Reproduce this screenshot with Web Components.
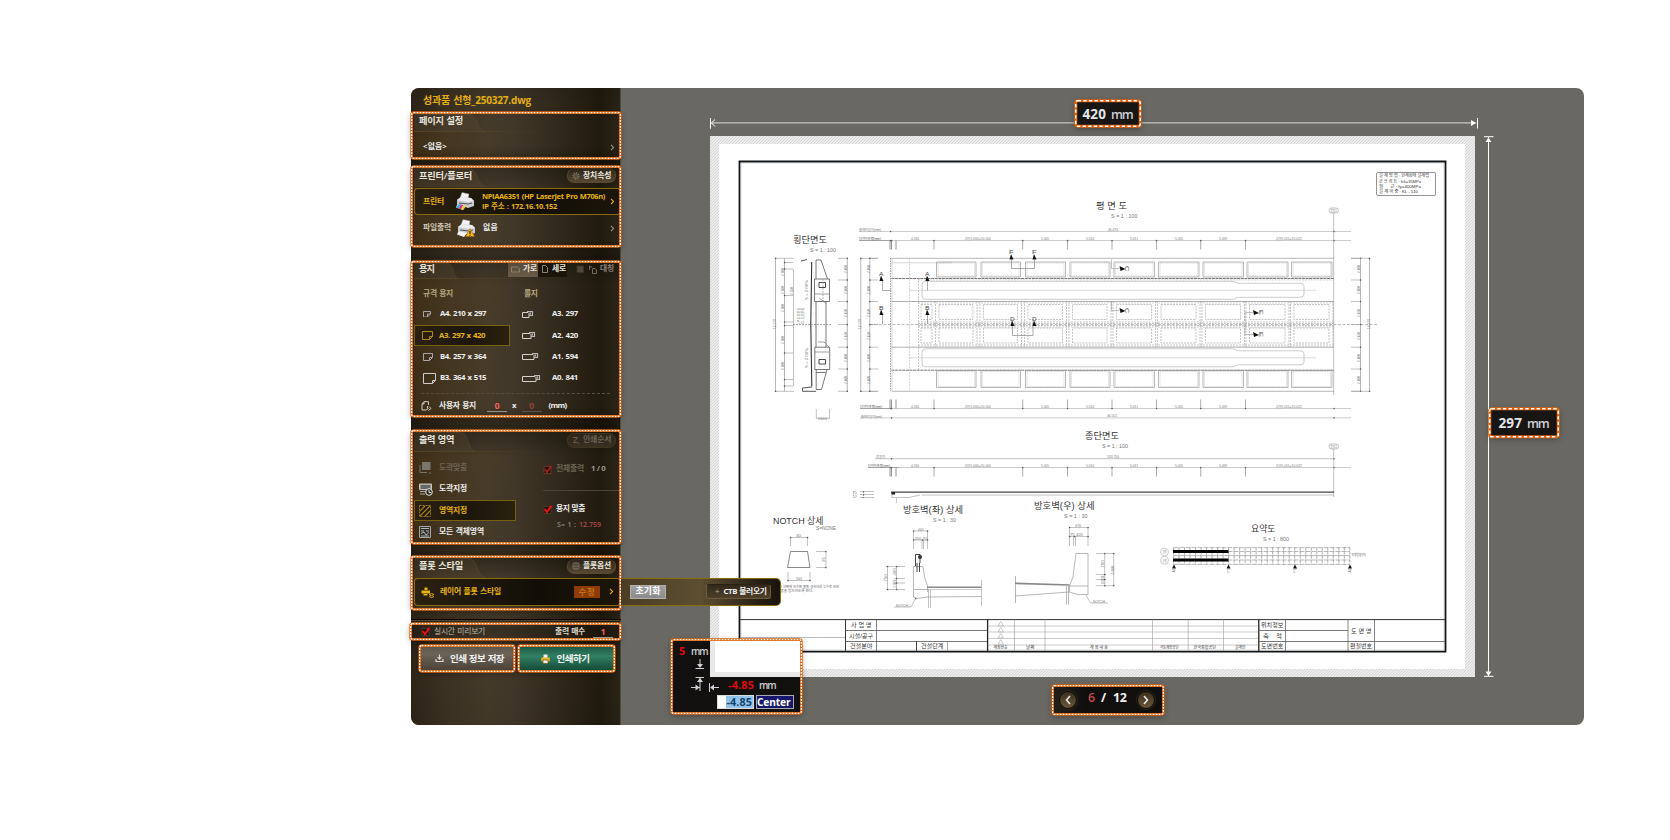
<!DOCTYPE html>
<html lang="ko">
<head>
<meta charset="utf-8">
<title>Plot preview</title>
<style>
html,body{margin:0;height:100%;background:#fff}
body{font-family:"Open Sans","Noto Sans CJK KR",sans-serif;font-weight:600;color:#eee;overflow:hidden;padding:88px 0 0 411px;box-sizing:border-box}
</style>
</head>
<body>
<plot-window></plot-window>
<script>
const define = (name, html, init) => customElements.define(name, class extends HTMLElement {
  connectedCallback() {
    if (this.shadowRoot) return;
    const root = this.attachShadow({mode: 'open'});
    const t = document.createElement('template');
    t.innerHTML = typeof html === 'function' ? html(this) : html;
    root.append(t.content.cloneNode(true));
    if (init) init(this, root);
  }
});

define('plot-window', `
<style>
:host{display:grid;grid-template-columns:210px 1fr;width:1173px;height:637px;border-radius:8px;background:#6a6863}
side-panel{z-index:2}
</style>
<side-panel></side-panel><preview-area></preview-area>`);

/* ---------- sidebar ---------- */
define('side-panel', `
<style>
:host{display:flex;flex-direction:column;position:relative;border-radius:8px 0 0 8px;line-height:1;font-size:7.800px;font-weight:700;word-spacing:.09em;
 background:linear-gradient(180deg,#0002 0,#0000 5%,#0000 9%,#0004 12%,#0000 16%,#0000 24%,#0004 26.5%,#0000 31%,#0000 50%,#0005 53%,#0000 58%,#0000 71%,#0005 73.5%,#0000 77%,#0000 82%,#0003 85%,#0000 90%,#0001 100%),
 linear-gradient(90deg,#2e2518 0,#3c3223 16%,#453b2a 36%,#42382a 48%,#31291b 70%,#211a0e 90%,#2c2518 100%);
 box-shadow:inset -1px 0 #504a3c}
.title{height:24px;display:flex;align-items:center;padding-left:12px;color:#e6b011;font-size:10px;font-weight:700}
.row{display:flex;align-items:center}
.row>*{flex:none}
.gold{color:#e2ae13}
.dim{color:#6c6455}
.sel{box-sizing:border-box;border:1px solid #77600f;background:linear-gradient(90deg,#2a2112,#1d160b 55%,#2a210f);color:#e8b411}
.printer{height:27px;margin:2px 0 0 3px;padding-left:8px;border-radius:4px;border-color:#8b6b10;border-right-color:#5f4b15;background:linear-gradient(90deg,#2b2111,#120e07 60%,#1c150a)}
.chev{margin-left:auto;margin-right:6px}
.chev:not(.gold){color:#958e7f}
.grid{display:grid;grid-template-columns:96px 1fr;margin-left:3px}
.cell{display:flex;align-items:center;height:21.4px;box-sizing:border-box;padding-left:8px;border:1px solid transparent}
.cell>*{flex:none}
.cell ui-icon{width:17px}
.cell.r{padding-left:11px}
.cell.r ui-icon{width:30px}
.cell.sel{padding-left:7px;border:1px solid #77600f}
.num{border-bottom:1px solid #99938a;width:20px;text-align:center;height:12px;line-height:12px;box-sizing:border-box;color:#f0605e;font-size:9px}
.tog{height:15px;display:flex;align-items:center;background:#1a140b;box-sizing:border-box;width:29px;padding-left:4px}
.tog.on{background:linear-gradient(#57493a,#6b5b48);width:30.5px;padding-left:3px}
.tog fit-text{margin-left:auto;margin-right:1px}
.flag{display:flex;align-items:center}
.sep{height:1px;background:#0c0904;border-bottom:1px solid #4d4536;margin-top:10px}
.actions{display:grid;grid-template-columns:96px 97px;gap:2.5px;margin:5px 0 0 8px}
.btn{display:flex;align-items:center;height:23px;margin:2px;font-size:9.500px;font-weight:600;color:#f2f2f2}
.save{background:linear-gradient(#5e554b,#6c6359 30%,#4b4238)}
.print{background:linear-gradient(#1e5a46,#328063 40%,#144b39)}
.btn ui-icon{margin:0 5px 0 14px}
.fly{position:absolute;left:210px;top:490px;width:160px;height:27.5px;box-sizing:border-box;border:1px solid #86690e;border-left:0;border-radius:0 5px 5px 0;background:linear-gradient(90deg,#4a3d24,#5d4e31 50%,#2a2216 85%,#191309);display:flex;align-items:center}
.fly .reset{margin-left:9px;width:36px;height:14px;background:linear-gradient(#a0a0a0,#8b8b8b);border:1px solid #b0b0ae;box-sizing:border-box;font-size:8.800px;font-weight:600;display:flex;align-items:center;justify-content:center;color:#fff}
.fly .ctb{margin-left:40px;width:65px;height:15px;border-radius:3px;box-sizing:border-box;background:linear-gradient(#33291a,#4e402a);border:1px solid #6c5a3b;border-top-color:#2a2115;display:flex;align-items:center;padding-left:8px;color:#f0f0f0}
.fix{width:26px;height:12.5px;background:#8c3c04;color:#c2701c;display:flex;align-items:center;justify-content:center;font-size:8.5px;font-weight:600}
</style>
<div class="title"><fit-text w="108">성과품 선형_250327.dwg</fit-text></div>

<plot-section style="--h:47px;--head:19px">
  <fit-text slot="head" w="44">페이지 설정</fit-text>
  <div class="row" style="height:32px;padding-left:12px"><fit-text w="24">&lt;없음&gt;</fit-text><ui-icon class="chev" name="chev"></ui-icon></div>
</plot-section>

<plot-section style="--h:79px;--head:20px;margin-top:7px">
  <fit-text slot="head" w="53">프린터/플로터</fit-text>
  <pill-button slot="tool" icon="gear"><fit-text w="28.5">장치속성</fit-text></pill-button>
  <div class="row sel printer">
    <fit-text w="21">프린터</fit-text><ui-icon name="printer" style="margin:0 8px 0 12px"></ui-icon>
    <div style="display:grid;justify-items:start;gap:2px;font-size:7.5px;font-weight:700"><fit-text w="123">NPIAA6351 (HP LaserJet Pro M706n)</fit-text><fit-text w="75">IP 주소 : 172.16.10.152</fit-text></div>
    <ui-icon class="chev gold" name="chev" style="margin-right:5px"></ui-icon>
  </div>
  <div class="row" style="height:26px;padding-left:12px">
    <fit-text w="28" style="color:#cfc8b6">파일출력</fit-text><ui-icon name="printerwarn" style="margin:0 8px 0 6px"></ui-icon><fit-text w="15">없음</fit-text>
    <ui-icon class="chev" name="chev"></ui-icon>
  </div>
</plot-section>

<plot-section style="--h:156px;--head:17px;margin-top:16px;--tab:45px">
  <fit-text slot="head" w="15">용지</fit-text>
  <div slot="tool" class="flag">
    <div class="tog on"><ui-icon name="land"></ui-icon><fit-text w="14">가로</fit-text></div>
    <div class="tog"><ui-icon name="port"></ui-icon><fit-text w="14">세로</fit-text></div>
    <ui-icon name="box" style="margin-left:9px"></ui-icon><ui-icon name="mirror" style="margin:0 3px 0 5px"></ui-icon><fit-text w="14" style="color:#8d867a;margin-right:2px">대칭</fit-text>
  </div>
  <div class="row" style="height:17.5px;padding:7px 0 1px 12px;color:#b5a87f"><fit-text w="30">규격 용지</fit-text><fit-text w="13.5" style="margin-left:71px">롤지</fit-text></div>
  <div class="grid">
    <div class="cell"><ui-icon name="a4"></ui-icon><fit-text w="46">A4. 210 x 297</fit-text></div><div class="cell r"><ui-icon name="r3"></ui-icon><fit-text w="26">A3. 297</fit-text></div>
    <div class="cell sel"><ui-icon name="a3"></ui-icon><fit-text w="46">A3. 297 x 420</fit-text></div><div class="cell r"><ui-icon name="r2"></ui-icon><fit-text w="26">A2. 420</fit-text></div>
    <div class="cell"><ui-icon name="b4"></ui-icon><fit-text w="46">B4. 257 x 364</fit-text></div><div class="cell r"><ui-icon name="r1"></ui-icon><fit-text w="26">A1. 594</fit-text></div>
    <div class="cell"><ui-icon name="b3"></ui-icon><fit-text w="46">B3. 364 x 515</fit-text></div><div class="cell r"><ui-icon name="r0"></ui-icon><fit-text w="26">A0. 841</fit-text></div>
  </div>
  <div style="border-top:1px dashed #574d3c;margin:4px 11px 0 10px"></div>
  <div class="row" style="height:23px;padding-left:10px"><ui-icon name="custom" style="width:18px"></ui-icon><fit-text w="37">사용자 용지</fit-text><span class="num" style="margin-left:11px">0</span><span style="margin:0 5px">x</span><span class="num" style="color:#8f4039;border-color:#5c554a">0</span><fit-text w="18" style="margin-left:7px">(mm)</fit-text></div>
</plot-section>

<plot-section style="--h:114px;--head:21px;margin-top:13px;--tab:62px">
  <fit-text slot="head" w="35">출력 영역</fit-text>
  <pill-button slot="tool" icon="order" class="dim"><fit-text w="28.5">인쇄순서</fit-text></pill-button>
  <div class="grid" style="grid-template-columns:102px 1fr;padding-top:6.3px">
    <div>
      <div class="cell dim" style="padding-left:4px"><ui-icon name="fit" style="width:20px"></ui-icon><fit-text w="28">도곽맞춤</fit-text></div>
      <div class="cell" style="padding-left:4px"><ui-icon name="pick" style="width:20px"></ui-icon><fit-text w="28">도곽지정</fit-text></div>
      <div class="cell sel" style="padding-left:4px"><ui-icon name="area" style="width:20px"></ui-icon><fit-text w="28">영역지정</fit-text></div>
      <div class="cell" style="padding-left:4px"><ui-icon name="all" style="width:20px"></ui-icon><fit-text w="45">모든 객체영역</fit-text></div>
    </div>
    <div style="padding-left:27px">
      <div class="row dim" style="height:24px"><ui-icon name="checkdim" style="margin-right:4px"></ui-icon><fit-text w="28">전체출력</fit-text><fit-text w="14" style="margin-left:7px;color:#9d978c">1 / 0</fit-text></div>
      <div style="border-top:1px solid #4b463b;margin:9px 2px 10px 0"></div>
      <div class="row" style="height:16px;font-weight:600"><ui-icon name="check" style="margin-right:4px"></ui-icon><fit-text w="29">용지 맞춤</fit-text></div>
      <div class="row" style="height:14px;padding-left:14px;color:#8f897e;font-size:7px;font-weight:600"><fit-text w="19">S= 1 :</fit-text><fit-text w="22" style="margin-left:3px;color:#b04c4c">12.759</fit-text></div>
    </div>
  </div>
</plot-section>

<plot-section style="--h:53px;--head:21px;margin-top:12px">
  <fit-text slot="head" w="44">플롯 스타일</fit-text>
  <pill-button slot="tool" icon="opt"><fit-text w="28">플롯옵션</fit-text></pill-button>
  <div class="row sel printer" style="margin-top:1px;height:27.5px;padding-left:6px">
    <ui-icon name="layer" style="width:19px"></ui-icon><fit-text w="61">레이어 플롯 스타일</fit-text><span class="fix" style="margin-left:73px"><fit-text w="17">수정</fit-text></span>
    <ui-icon class="chev gold" name="chev"></ui-icon>
  </div>
</plot-section>

<div class="sep"></div>
<callout-frame style="margin:2px 0 0 -1px;height:17px">
  <div class="row" style="height:17px;padding-left:11px;color:#bdb6a9"><ui-icon name="check" style="margin-right:4px"></ui-icon><fit-text w="51" style="font-weight:400">실시간 미리보기</fit-text><fit-text w="30" style="margin-left:70px;color:#ddd8cc">출력 매수</fit-text><span class="num" style="margin-left:8px">1</span></div>
</callout-frame>
<div class="actions">
  <callout-frame><div class="btn save"><ui-icon name="save"></ui-icon><fit-text w="54" style="margin-left:1px">인쇄 정보 저장</fit-text></div></callout-frame>
  <callout-frame><div class="btn print"><ui-icon name="go" style="margin:0 7px 0 21px"></ui-icon><fit-text w="33">인쇄하기</fit-text></div></callout-frame>
</div>
<div class="fly"><span class="reset"><fit-text w="25">초기화</fit-text></span><span class="ctb"><span style="color:#9b927f;margin-right:4px">+</span><fit-text w="43">CTB 불러오기</fit-text></span></div>
`);

define('plot-section', `
<style>
:host{display:block;height:var(--h)}
header{height:var(--head);display:flex;align-items:center;justify-content:space-between;box-sizing:border-box;padding:0 5px 1px 8px;font-size:9.200px;font-weight:600;color:#e9e6de;position:relative}
header svg{position:absolute;left:3px;top:2px;width:var(--tab,72px);height:calc(100% - 1px)}
.head,.tool{position:relative}
.tool{font-size:7.800px;font-weight:700}
.panel{height:calc(var(--h) - var(--head));border-radius:4px 0 0 0;background:linear-gradient(90deg,#7a5c264d,#0000 75%) 3px 0/100% 1px no-repeat,linear-gradient(100deg,#7b4f1238,#0000 45%) 3px 0 no-repeat}
</style>
<callout-frame><header><svg viewBox="0 0 72 18" preserveAspectRatio="none"><path d="M0 18V3Q0 .5 3 .5H54Q60 .5 63 8Q66 17 72 18Z" fill="#5a4c3355"/><path d="M0 3Q0 .5 3 .5H54Q60 .5 63 8Q66 17 72 18" fill="none" stroke="#6a573855"/></svg><span class="head"><slot name="head"></slot></span><span class="tool"><slot name="tool"></slot></span></header><div class="panel"><slot></slot></div></callout-frame>`);

define('pill-button', el => `
<style>
:host{display:flex;width:49px;height:15px;box-sizing:border-box;border-radius:7px;align-items:center;padding-left:4px;background:linear-gradient(#2d2518,#574833);border:1px solid #58492f;border-top-color:#3a3021}
:host(.dim){background:linear-gradient(#2d2518,#3a3022);border-color:#40361f}
ui-icon{width:11px;color:#8d8576}
:host(.dim) ui-icon{color:#6c6455}
</style><ui-icon name="${el.getAttribute('icon')}"></ui-icon><slot></slot>`);

/* orange outline with white dashes running along it */
define('callout-frame', el => { const d = el.getAttribute('dash') || '1.7 1.3', w = +(el.getAttribute('weight') || 2.6); return `
<style>
:host{display:block;position:relative}
:host::before{content:"";position:absolute;inset:0;border-radius:3px;box-shadow:0 2px 6px #0005;pointer-events:none}
svg{position:absolute;left:0;top:0;width:100%;height:100%;overflow:visible;pointer-events:none}
rect{fill:none;width:calc(100% - ${w/2}px);height:calc(100% - ${w/2}px)}
</style><slot></slot><svg><rect x="${w/4}" y="${w/4}" rx="2" stroke="#e2620c" stroke-width="${w}"/><rect x="${w/4}" y="${w/4}" rx="2" stroke="#fff" stroke-width="${w*.5}" stroke-dasharray="${d}"/></svg>`; });

const printer = `<path d="M4 6 6 .5 13 2 12 7Z" fill="#f4f4f4" stroke="#999" stroke-width=".4"/><path d="M1 8 5 5 15 6 18 9V14L12 16 1 12Z" fill="#c9cbcf"/><path d="M1 8 5 5 15 6 18 9 12 10Z" fill="#ececee"/><path d="M3 11 12 12 16 11" stroke="#555" fill="none"/>`;
const sheet = (w, h, c) => [w, h, `<path d="M.5.5H${w-.5}V${h-3.5}L${w-3.5} ${h-.5}H.5ZM${w-3.5} ${h-.5}V${h-3.5}H${w-.5}" fill="none" stroke="${c}"/>`];
const roll = w => [w, 9, `<path d="M${w-6} 2.5H.5V7.5H${w-5}V2.5" fill="none" stroke="#d5d1ca"/><path d="M${w-7} 1.5H${w-1.5}V5.5H${w-5}M${w-3.5} 2.5V4.5" fill="none" stroke="#b9b7ba" stroke-width="1.2"/>`];
const tick = (b, c) => [9, 9, `<path d="M1 1.5H8V8.5H1Z" fill="#1a120b" stroke="${b}"/><path d="M1.8 4 4 7 8.4.8" fill="none" stroke="${c}" stroke-width="2"/>`];
const ICONS = {
  chev: [5, 7, `<path d="M1 .8 3.6 3.5 1 6.2" fill="none" stroke="currentColor" stroke-width="1.1"/>`],
  gear: [8, 8, `<circle cx="4" cy="4" r="2.9" fill="none" stroke="currentColor" stroke-width="1.1" stroke-dasharray="1.3 .9"/><circle cx="4" cy="4" r="1.5" fill="none" stroke="currentColor" stroke-width=".6"/>`],
  order: [8, 8, `<path d="M1 1.5H5.5L1.5 6.5H5.5M6 7.3H7.5" fill="none" stroke="currentColor" stroke-width=".9"/>`],
  opt: [8, 8, `<rect x="1" y="1" width="6" height="6" rx="1.4" fill="none" stroke="currentColor" stroke-width=".8"/><path d="M1 4H7M3 1V7M5 1V7" stroke="currentColor" stroke-width=".5"/>`],
  printer: [18, 19, printer + `<path d="M1.500 12 10 14 7 18 0 15.500Z" fill="#f3f3f3"/><path d="M0 15.500 3 12 4.800 12.500 2.500 16.400Z" fill="#27b4de"/><path d="M2.500 16.400 4.800 12.500 7.300 13.200 5 17.300Z" fill="#d92f9b"/><path d="M5 17.300 7.300 13.200 10 14 7 18Z" fill="#ecd02c"/>`],
  printerwarn: [18, 19, printer + `<path d="M1.500 12 10 14 7 18 0 15.500Z" fill="#f3f3f3"/><path d="M13 9.500 17.600 17.500H8.500Z" fill="#f4b81c" stroke="#8a5f05" stroke-width=".5"/><path d="M13 12V15M13 15.800V16.800" stroke="#2a1c00" stroke-width="1.100"/>`],
  land: [9, 7, `<path d="M.5 1H6.500L8.500 3V6H.5Z" fill="none" stroke="#8d7f69"/>`],
  port: [6, 8, `<path d="M.5.5H3.500L5.500 2.500V7.500H.5Z" fill="none" stroke="#8b857b"/>`],
  box: [8, 8, `<path d="M1 1H7.500V7.500H1Z" fill="#51483a" stroke="#3a3224"/>`],
  mirror: [8, 9, `<path d="M.5 5V1L3 2.500M3.500 3.500H6L7.500 5V8.500H3.500Z" fill="none" stroke="#7c7466" stroke-width=".9"/>`],
  a4: sheet(8, 6.500, '#aaa5a9'), a3: sheet(11, 9, '#ad8a13'), b4: sheet(10, 8, '#aaa5a9'), b3: sheet(13, 11, '#d0cdc9'),
  r3: roll(12), r2: roll(14), r1: roll(17), r0: roll(19),
  custom: [11, 10, `<path d="M5 9H1V3L3 .7H7.500V4M3 .7V3H1M6.500 5V7.500M5 9 7.500 7.500M8 5.500 10 7.500 7.500 9.500" fill="none" stroke="#ccc8bf" stroke-width="1"/>`],
  fit: [12, 13, `<path d="M3 1H11.500V9H3Z" fill="#79756a"/><path d="M1 4V11.500H8M10 12H12" fill="none" stroke="#79756a" stroke-width="1"/>`],
  pick: [14, 13, `<path d="M.5 1H12.500V6.500H.5Z" fill="#999791" stroke="#c5c4c0"/><path d="M2 3H11M2 5H11" stroke="#222" stroke-width=".8"/><path d="M1 8.500H8M1 11H6" stroke="#aaa8a2"/><circle cx="10" cy="9" r="3.300" fill="#2a2315" stroke="#eee"/><path d="M10 7V9.500H12" stroke="#eee" fill="none"/>`],
  area: [12, 12, `<path d="M.5.5H11.500V11.500H.5Z" fill="#221a08" stroke="#987811" stroke-dasharray="2 1"/><path d="M1 6 6 1M1 11 11 1M6 11 11 6" stroke="#a98513" stroke-width="1.100"/>`],
  all: [12, 12, `<path d="M.5.5H11.500V11.500H.5Z" fill="#33302c" stroke="#a7a6a4"/><path d="M2 2.500H10M2 5H5M7 5H10M2 7.500 5 6 7 9 10 6.500M2 10H10" stroke="#b5b4b2" fill="none"/>`],
  check: tick('#49362a', '#f0100c'), checkdim: tick('#6a3428', '#9a211a'),
  layer: [14, 12, `<path d="M3.500 1.500H6.500V4H3.500ZM.5 4.500H9V7.500H.5ZM2.500 8H6.500V9.500H2.500Z" fill="#e5b312"/><path d="M8 8.500 10.500 7.500 13 8.500 10.500 9.700ZM8 10.500 10.500 11.500 13 10.500" fill="none" stroke="#d5a712" stroke-width="1"/>`],
  save: [9, 9, `<path d="M4.500.5V5M2.500 3.200 4.500 5.200 6.500 3.200M1 5V7.500H8V5" fill="none" stroke="#dedbd5" stroke-width="1.100"/>`],
  go: [9, 10, `<path d="M2.500.5H6.500V4H2.500Z" fill="#eee"/><path d="M.3 3.500H8.700V7.500H.3Z" fill="#efb425"/><path d="M2 6H7V9.500H2Z" fill="#f0eee6" stroke="#6f5412" stroke-width=".7"/>`]
};
define('ui-icon', el => { const [w, h, p] = ICONS[el.getAttribute('name')]; return `<style>:host{display:inline-block;line-height:0}</style><svg width="${w}" height="${h}" viewBox="0 0 ${w} ${h}">${p}</svg>`; });

/* ---------- preview ---------- */
define('preview-area', `
<style>
:host{display:grid;grid-template-columns:89px 765px 1fr;grid-template-rows:48px 541px 1fr;position:relative;line-height:1}
.top{grid-area:1/2;margin:25px -3px 0 0}
.right{grid-area:2/3;padding-left:8px}
drawing-sheet{grid-area:2/2}
.pg{grid-area:3/2;justify-self:start;margin:7.500px 0 0 342px}
dim-badge,margin-box{position:absolute}
svg{display:block;overflow:visible}
</style>
<svg class="top" width="768" height="20" viewBox="0 0 768 20"><g stroke="#f2f2f0" fill="none"><path d="M.5 5.500V15.500M1 9.900H766" stroke="#deddd8"/><path d="M5 6.500 1.500 9.900 5 13.500M.5 5V15.500M767.500 5V15.500" stroke="#fff"/></g><path d="M761 7V13L766 10Z" fill="#fff"/></svg>
<drawing-sheet></drawing-sheet>
<svg class="right" width="12" height="541" viewBox="0 0 12 541"><path d="M1 .7H10.500M1 540.300H10.500M5.500 1V540" stroke="#fff"/><path d="M5.500 1.500 8.500 6H2.500ZM5.500 540 8.500 535.500H2.500Z" fill="#fff"/></svg>
<page-nav class="pg"></page-nav>
<dim-badge style="left:453.500px;top:12px;width:66px;height:27px" value="420"></dim-badge>
<dim-badge style="left:867.500px;top:319.500px;width:70px;height:29.500px" value="297"></dim-badge>
<margin-box style="left:50px;top:551px"></margin-box>`);

define('dim-badge', el => `
<style>:host{box-sizing:border-box}
callout-frame,.b{width:100%;height:100%}
.b{background:#171615;display:flex;align-items:center;justify-content:center;gap:5px;border-radius:3px;font-size:13.500px;color:#e3e6ea;font-weight:700;padding-top:3px;box-sizing:border-box}
.u{font-size:12.500px;font-weight:600;color:#ced1d6;padding-top:1px}</style>
<callout-frame weight="3" dash="3.300 2.300"><div class="b"><fit-text w="23.500">${el.getAttribute('value')}</fit-text><fit-text class="u" w="21.500">mm</fit-text></div></callout-frame>`);

define('page-nav', `
<style>:host{display:block}
.b{width:112px;height:30px;box-sizing:border-box;background:linear-gradient(90deg,#241f1a,#100f0e 30%,#100f0e);border-radius:3px;display:flex;align-items:center;padding:0 9px 0 7px;font-size:12.500px;font-weight:700;color:#f1f1f1}
i{width:18px;height:18px;border-radius:50%;background:linear-gradient(#3b301f,#695638);border:1px solid #0a0805;outline:1px solid #2d2519;box-sizing:border-box;display:grid;place-items:center}
fit-text{position:relative;top:-1px}
.r{color:#c34a4a;font-weight:600;margin:0 6px 0 11px}</style>
<callout-frame><div class="b"><i><svg width="6" height="10"><path d="M5 1 1.500 5 5 9" fill="none" stroke="#eee" stroke-width="1.500"/></svg></i><fit-text class="r" w="7">6</fit-text><fit-text w="6">/</fit-text><fit-text w="13.500" style="margin:0 9px 0 6px">12</fit-text><i style="margin-left:auto"><svg width="6" height="10"><path d="M1 1 4.500 5 1 9" fill="none" stroke="#eee" stroke-width="1.500"/></svg></i></div></callout-frame>`);

define('margin-box', `
<style>:host{display:block;width:131px;height:75px}
.b{display:grid;grid-template-columns:38.500px 1fr;grid-template-rows:38px 1fr;height:75px;background:#12110f;font-size:10.800px;color:#ced1d6;border-radius:3px}
.u{font-size:9.800px}
.sheet{background:#fff;border-left:5px solid #e9e9e9;border-bottom:5px solid #e9e9e9;margin-right:1px}
.v{padding:6.500px 0 0 8px;display:flex;gap:5.500px;align-items:baseline}
.red{color:#e00b0b;font-weight:700}
.h{grid-column:1/3;display:grid;grid-template-rows:17.500px 15px}
.l{display:flex;align-items:center;padding-left:57px}
.in{width:37px;height:14px;border:1px solid #ddd;box-sizing:border-box;background:linear-gradient(90deg,#fff 8px,#91c3ec 8px);color:#17436a;display:flex;align-items:center;justify-content:flex-end;padding-right:1px;font-weight:700}
.c{width:38px;height:14px;border:1px solid #a9a9b4;box-sizing:border-box;background:#17176b;color:#fff;font-weight:700;margin-left:2px;display:flex;align-items:center;font-size:10.200px}
svg{position:absolute;left:0;top:0}</style>
<callout-frame><div class="b"><div class="v"><fit-text class="red" w="6.500">5</fit-text><fit-text class="u" w="16.500">mm</fit-text></div><div class="sheet"></div>
<div class="h"><div class="l"><fit-text class="red" w="26">-4.85</fit-text><fit-text class="u" w="16.500" style="margin-left:5px">mm</fit-text></div>
<div class="l" style="padding-left:46px"><span class="in"><fit-text w="25.500">-4.85</fit-text></span><span class="c"><fit-text w="33.500">Center</fit-text></span></div></div></div>
<svg width="60" height="60"><path d="M24.500 29.500H33M29 20V28M24.500 38.500H33M29 39V52M20 48.500H29M38.500 44V53M40 48.500H48" stroke="#cfd3d8" fill="none"/><path d="M29 29 26 25H32ZM29 39 26 43H32ZM28.500 48.500 24.500 45.500V51.500ZM39 48.500 43 45.500V51.500Z" fill="#cfd3d8"/></svg></callout-frame>`);

/* bridge deck drawing, in window coordinates */
function bridge() {
  const o = [];
  const P = (d, c = '#aaa', w = .6, x = '') => o.push(`<path d="${d}" stroke="${c}" stroke-width="${w}" fill="none" ${x}/>`);
  const H = (x1, x2, y, c, w, x) => P(`M${x1} ${y}H${x2}`, c, w, x);
  const V = (x, y1, y2, c, w, e) => P(`M${x} ${y1}V${y2}`, c, w, e);
  const R = (x1, y1, x2, y2, c, w, e) => P(`M${x1} ${y1}H${x2}V${y2}H${x1}Z`, c, w, e);
  const T = (x1, x2, cy, s, t, c = '#777', e = '') => o.push(`<text x="${x1}" y="${cy + s * .36}" font-size="${s}" textLength="${x2 - x1}" lengthAdjust="spacingAndGlyphs" fill="${c}" ${e}>${t}</text>`);
  const VT = (x, cy, w, t) => T(-w / 2, w / 2, 0, 3.6, t, '#777', `transform="translate(${x} ${cy}) rotate(-90)"`);
  const dot = (x, y) => o.push(`<rect x="${x - .6}" y="${y - .6}" width="1.300" height="1.300" fill="#555"/>`);
  const D = 'stroke-dasharray="2 1"';
  // sheet border
  R(739.5, 161.500, 1445.500, 651.700, '#111417', 1.800); R(741, 163, 1444, 650, '#aaa', .4);
  // material note
  o.push('<rect x="1376.500" y="172.500" width="59" height="23" rx="1.500" fill="none" stroke="#888" stroke-width=".9"/>');
  [['설 계 방 법 : 한계상태 설계법', 1429], ['콘 크 리 트 : fck=35MPa', 1421], ['철 &#160; &#160; &#160;근 : fy=400MPa', 1421], ['설 계 하 중 : KL - 510', 1418]].forEach(([t, x], i) => T(1379, x, 175.800 + i * 5.300, 4, t, '#333'));
  // headings
  T(1096, 1127, 205.500, 9, '평 면 도', '#333'); T(1111, 1137.500, 216, 5, 'S = 1 : 100');
  T(793, 827, 239.500, 9, '횡단면도', '#333'); T(810, 836, 250, 5, 'S = 1 : 100');
  T(1085, 1119, 435.800, 9, '종단면도', '#333'); T(1102, 1128, 446, 5, 'S = 1 : 100');
  T(903, 963, 509.500, 9, '방호벽(좌) 상세', '#333'); T(933, 956, 520, 5, 'S = 1 : 30');
  T(1034, 1094.500, 505.500, 9, '방호벽(우) 상세', '#333'); T(1064, 1087.500, 516, 5, 'S = 1 : 30');
  T(773, 823.500, 521, 9, 'NOTCH 상세', '#333'); T(816, 836, 528.500, 5, 'S=NONE');
  T(1251, 1275.500, 529, 8.600, '요약도', '#333'); T(1263, 1289, 539.500, 5, 'S = 1 : 800');
  // dimension strings
  const ticks = [934, 1022.700, 1067.500, 1112, 1156.500, 1200.700, 1245.500];
  const labels = [[915, '4,260'], [978, '2@5,000=10,000'], [1045, '5,005'], [1090, '5,010'], [1134, '5,011'], [1179, '5,005'], [1223, '5,009'], [1289, '2@5,011=10,022']];
  const chain = (y, dir, yl, x0) => { H(x0, 1351, y, '#aaa'); ticks.forEach(x => { V(x, y, y + 9 * dir, '#888', .7); dot(x, y); }); [890, 891.500, 896].forEach(x => V(x, y, y + 9 * dir, '#666', .7)); dot(890.500, y); dot(891.500, y); dot(1334, y);
    labels.forEach(([x, t]) => { const w = t.length > 6 ? 26 : 8; T(x - w / 2, x + w / 2, yl, 3.600, t, '#777'); }); T(x0, x0 + 22, yl, 3.600, '다이아프램(mm)', '#555'); H(x0, x0 + 31, y, '#888'); };
  H(859, 1351, 231.500, '#aaa'); dot(890.500, 231.500); dot(1334, 231.500); T(859, 881, 230, 3.600, '슬래브길이(mm)'); T(1108, 1118, 229.500, 3.600, '46.470', '#777'); chain(240.500, 1, 238.800, 859);
  chain(408.500, -1, 407, 860); H(860, 1351, 417.900, '#aaa'); dot(891.500, 417.800); dot(1334, 417.800); T(861, 882, 416.500, 3.600, '슬래브길이(mm)'); T(1107, 1117, 415.500, 3.600, '46.501', '#777');
  H(875, 1334, 458.700, '#999'); dot(891.500, 458.700); dot(1334, 458.700); T(876, 885, 457, 3.600, '총길이'); T(1107, 1119, 457, 3.600, '133.750', '#777'); chain(467.500, 1, 465.800, 868);
  [[210.500, 213, 395], [446.500, 449, 497]].forEach(([y, a, b]) => { o.push(`<rect x="1329" y="${y - 2.500}" width="9.500" height="5" rx="2.500" fill="none" stroke="#999" stroke-width=".6"/>`); T(1330.500, 1337, y, 3.500, '받침1'); V(1333.700, a, b, '#999', .6); });
  // plan outline and bands
  [258.300, 391.300].forEach(y => H(891.500, 1334, y, '#999', .7));
  [278.500, 370.200].forEach(y => H(891.500, 1334, y, '#777', 1, 'stroke-dasharray="3 .6"'));
  [301.500, 347.200].forEach(y => H(891.500, 1334, y, '#999', .8));
  [280, 346].forEach(y => H(918, 1334, y, '#bbb', .6, D));
  H(891, 952, 262.800, '#bbb'); V(890.500, 258, 391, '#888', .8, 'stroke-dasharray="1.500 1"'); V(892, 258, 391, '#bbb'); V(909.500, 258, 391, '#bbb', .6, D); V(918.500, 278, 370, '#aaa', .6, D);
  const cells = [[936.500, 976], [981, 1020.500], [1025.500, 1065.500], [1070, 1110], [1114, 1154.500], [1158.500, 1199], [1203, 1243.500], [1247, 1288], [1291.500, 1332]];
  cells.forEach(([a, b]) => {
    [[262, 277], [370.500, 387.500]].forEach(([t, u]) => { R(a, t, b, u, '#999', .7); R(a + 1.500, t + 1, b - 1.500, u - 1, '#bbb', .6, 'stroke-dasharray="1 .7"'); });
    [[304.500, 319.500], [328, 343]].forEach(([t, u]) => { R(a + 2.500, t, b - 3, u, '#aaa', .7, D); });
    V(b + 1, 301, 347, '#aaa', .7, D); V(a - 1, 301, 347, '#aaa', .7, D);
  });
  [[304.500, 319.500], [328, 343]].forEach(([t, u]) => R(921, t, 932, u, '#aaa', .7, D));
  [322, 323.500, 325.500, 327].forEach(y => H(918, 1334, y, '#aaa', .7, 'stroke-dasharray="1.800 1.200"')); [303, 344.800].forEach(y => H(918, 1334, y, '#bbb', .6, D));
  H(870, 1378, 324.600, '#888', .6, 'stroke-dasharray="3 1.500"');
  [290.300, 357.800].forEach(y => { P(`M925 ${y - 9}H1233L1238 ${y - 7}H1300Q1304 ${y - 7} 1304 ${y - 4}V${y + 4}Q1304 ${y + 7} 1300 ${y + 7}H1238L1233 ${y + 9}H925Q922 ${y + 9} 922 ${y + 5}V${y - 5}Q922 ${y - 9} 925 ${y - 9}Z`, '#aaa', .6); H(909, 1316, y, '#b5b5b5', .5); });
  // vertical dimensions
  const ys = [258.300, 280, 301.500, 324.500, 347.200, 369, 391.300];
  const vd = (x, a, b, list) => { V(x, 258.300, 391.300, '#999', .7); list.forEach(y => { H(a, b, y, '#999', .6); dot(x, y); }); };
  vd(860.800, 860, 878, [258.300, 391.300]); vd(869.800, 869, 878, ys); vd(1360.500, 1351, 1361, ys); vd(1369.500, 1351, 1370, [258.300, 391.300]);
  vd(775.500, 775, 794, [258.300, 391.300]); vd(784.500, 784, 793, [262.500, 269, 295.500, 322, 325.500, 353, 379.500, 386]); V(793.500, 269, 386, '#999'); vd(847.300, 838, 848, ys);
  [269, 290, 313, 336, 358, 380].forEach((y, i) => { const t = ['2,400', '2,400', '2,450', '2,450', '2,400', '2,400'][i]; VT(868.300, y, 8, t); VT(1359, y, 8, t); VT(846, y, 8, t); });
  [272, 290, 308, 340, 366].forEach(y => VT(783.200, y, 8, '2,600')); VT(774.300, 324, 10, '12,170'); VT(859.500, 324, 10, '12,170'); VT(1368.300, 324, 10, '12,170'); VT(792, 291, 8, '2,350'); VT(807, 290, 20, 'S = 2.00%'); VT(807, 358, 20, 'S = 2.00%'); VT(799, 316, 16, 'LP 도로중심'); VT(802.500, 316, 16, 'CL 도로중심');
  // cross section
  P('M811.700 262 810.800 324 811.800 386.500', '#333', 1.100); P('M801 261 807 259.500M802.500 388 812 387M802.500 388V391.300H816', '#555', 1); H(793, 831, 324.600, '#777', .7, D);
  P('M816 279V260H821L827.500 279M814.500 279H829.500V301.500H814.500ZM816 301.500V347M826 301.500V347M814.800 347.200H829.700V369.500H814.800ZM816.200 369.500V389.500H821.500L827 369.500M816.200 372.500H826', '#555', .8);
  P('M819 282.500H825.500V287.500H819ZM819 359.500H825.500V364H819Z', '#333', .9); P('M814.500 294H829M814.800 352H829M819 298 826 303M818 342H824L829 347', '#777', .7); V(823, 279, 301, '#888', .6, D);
  H(816, 830, 418.300, '#888'); V(816.300, 409, 418, '#999'); V(829.500, 409, 418, '#999'); T(818, 827, 419, 3.400, '1500.0');
  // section marks
  const M = (x, y, l) => { o.push(`<path d="M${x} ${y}L${x + 2.500} ${y + 5.500}H${x - 1.500}Z" fill="#111"/>`); T(x - 2, x + 2.500, y - 2, 6, l, '#444'); };
  M(881, 275.500, 'A'); M(927, 275.500, 'A'); M(881, 309.500, 'B'); M(927, 309.500, 'B'); M(1011, 254, 'F'); M(1034, 254, 'F'); M(1012, 320.500, 'D'); M(1034, 320.500, 'D');
  P('M882.500 281V290.500H891M927.500 281V290.500M882.500 315V324M927.500 315V324M1011.500 259V268.500H1034.500V259M1012.500 326V335.500H1033V326', '#888', .7);
  [[1119.500, 268.500, 'C'], [1119.500, 310.500, 'C'], [1253, 312.500, 'E'], [1253, 334.500, 'E']].forEach(([x, y, l]) => { o.push(`<path d="M${x} ${y - 2.500}L${x + 6} ${y + .5} ${x + 1} ${y + 2.500}Z" fill="#111"/>`); T(-2.500, 2.500, 0, 6, l, '#444', `transform="translate(${x + 8} ${y}) rotate(90)"`); P(`M${x} ${y}H${x - 8}V${y + (l == 'C' || y > 320 ? -9 : 9)}`, '#999'); });
  // longitudinal section
  H(891, 1334, 492.200, '#444', 1.300); H(922, 1334, 495, '#aaa', .7); P('M892 492.500V497.500H909L920 495', '#999'); o.push('<rect x="891.500" y="492" width="3.500" height="2.500" fill="#222"/>'); V(896.500, 498, 503, '#aaa');
  R(853.500, 491.500, 856, 497.500, '#777', .6, D); V(863.500, 491, 498, '#333', 1.200, 'stroke-dasharray="1.500 1.500"'); [491.500, 494.500, 497.500].forEach(y => H(860, 874, y, '#999'));
  // notch detail
  P('M790.500 551.500H807.500L810 567.500H787.500Z', '#555', .7); P('M790.500 546V537.500H807.500V546M788 572V580.500H810V572M816 551.500H826V567.500H816', '#999', .6); [[790.500, 537.500], [807.500, 537.500], [788, 580.500], [810, 580.500], [825.800, 551.500], [825.800, 567.500]].forEach(a => dot(...a));
  T(796, 801, 535.800, 3.600, '30'); T(796, 802, 578.500, 3.600, '50'); VT(823.500, 559.500, 5, '25');
  T(768, 839, 586.300, 3.800, '주) 슬래브 하면에 지수판 홈을 설치하여 우수로 인한', '#666'); T(773, 813, 590.700, 3.800, '오염 등을 방지하도록 한다.', '#666');
  // left barrier
  P('M913.500 549V531H927.500V549M913.500 540H927.500M922 540V549M923.500 540V549', '#999', .6); [[913.500, 531], [927.500, 531], [913.500, 540], [922.500, 540], [927.500, 540]].forEach(a => dot(...a)); T(918, 923.500, 529.500, 3.500, '440'); T(914.500, 927, 538.800, 3.500, '250 70');
  P('M913.500 597V566.500H923L924.500 577 927.500 586V592M913.500 589.500H929M913.500 597 917 598.500 927 597 981 596.500', '#999', .7); H(927, 981, 587.300, '#888', 1.600); H(927, 981, 589.500, '#aaa');
  P('M915.500 554.500H920V563M915.500 554.500V566M917 563V572M919.500 563V572', '#333', .9); o.push('<circle cx="920" cy="557" r="2" fill="#333"/>'); P('M928.500 590V608M930.500 590V608M981.500 580V606', '#999');
  P('M886 566.500H905M886 589.500H905M887.500 566.500V589.500M896.500 566.500V589.500M894 578.500H905M894 583H905M915.500 598.500 911 607H894', '#999'); [[887.500, 566.500], [887.500, 589.500], [896.500, 566.500], [896.500, 578.500], [896.500, 583], [896.500, 589.500], [915.500, 598.500]].forEach(a => dot(...a)); VT(886, 578, 7, '750'); VT(895, 572, 7, '400'); VT(895, 584, 8, '100'); T(896, 908, 605.500, 3.600, 'NOTCH');
  // right barrier
  P('M1069.500 546V527.500H1088V546M1069.500 536.500H1088M1073.500 536V546M1075.500 536V546', '#999'); [[1069.500, 527.500], [1088, 527.500], [1069.500, 536.500], [1074.500, 536.500], [1088, 536.500]].forEach(a => dot(...a)); T(1075, 1081, 526, 3.500, '470'); T(1070, 1083, 535, 3.500, '75 420');
  P('M1069.500 592V586L1073 577 1076 553.500H1088V594.500H1078L1069 592 1015 596M1069 586H1088M1066.500 586V604.500M1068.500 586V604.500M1015.500 576V603', '#999', .7); P('M1015 583.300 1069.500 585', '#888', 1.600);
  P('M1096 553.500H1114M1096 585.700H1114M1104.700 553.500V585.700M1113.700 553.500V585.700M1096 574.500H1106M1096 579.500H1106M1086 595 1090.500 603H1108', '#999'); [[1104.700, 553.500], [1104.700, 574.500], [1104.700, 579.500], [1104.700, 585.700], [1113.700, 553.500], [1113.700, 585.700]].forEach(a => dot(...a)); VT(1103, 564, 7, '700'); VT(1103, 580, 9, '100'); VT(1112.300, 570, 8, '1,060'); T(1093, 1105, 601.500, 3.600, 'NOTCH');
  // key plan
  [547.600, 551.500, 555.600, 560, 564.400].forEach(y => H(1173.500, 1350, y, '#888', .6, y == 555.600 ? '' : 'stroke-dasharray="5 1"')); for (let x = 1173.500; x <= 1350.500; x += 5.510) V(x, 547.600, 564.400, '#777', .6, 'stroke-dasharray="3 1"');
  H(1173, 1228.500, 551.600, '#000', 3); H(1173, 1228.500, 560, '#000', 3); [552, 560.300].forEach(y => { o.push(`<circle cx="1164.500" cy="${y}" r="4" fill="none" stroke="#aaa" stroke-width=".6"/>`); T(1162.500, 1166.500, y, 3.500, '상행'); });
  [[1174, 'A1'], [1228.500, 'P1'], [1295, 'P2'], [1350, 'A2']].forEach(([x, t]) => { o.push(`<path d="M${x} 564.500 ${x + 2} 568.500H${x - 2}Z" fill="#111"/>`); VT(x, 570.500, 4, t); }); T(1351.500, 1366, 554.300, 3.600, '진행방향(하)', '#666');
  // title block
  const b = '#333'; H(740, 1445, 619.600, b, 1); H(740, 845, 637.500, '#999', .7); V(845.500, 619.500, 651, b, 1); V(876.500, 619.500, 651, '#666', .8); V(987.600, 619.500, 651, '#222', 1.300); V(1258.800, 619.500, 651, '#222', 1.300);
  [[630.500, 845, 987], [641.500, 845, 987], [630.500, 1258, 1348], [641.500, 1258, 1445]].forEach(([y, x1, x2]) => H(x1, x2, y, '#555', .8)); [626, 632, 638.500, 645].forEach(y => H(988, 1258, y, '#aaa', .6)); V(916.500, 641.500, 651, '#333', .9); V(947.500, 641.500, 651, '#888', .7);
  [1014.500, 1045, 1152.500, 1188.200, 1223.500].forEach(x => V(x, 619.500, 651, '#999', .6)); [1285.500, 1348, 1374.500].forEach(x => V(x, 619.500, 651, '#666', .8));
  [623.500, 629.500, 635.500, 641.700].forEach(y => P(`M998 ${y + 2.500}H1003.500L1000.700 ${y - 2}Z`, '#aaa', .6));
  [[851, 871.500, 625, '사 업 명'], [849, 873, 635.500, '시설/공구'], [850, 872.500, 646, '건설분야'], [921, 943.500, 646, '건설단계'], [1261, 1283.500, 625, '위치정보'], [1263, 1282, 635.500, '축 &#160; &#160;척'], [1261, 1283.500, 646, '도면번호'], [1351, 1371.500, 630.500, '도 면 명'], [1350, 1372, 646, '편철번호']].forEach(([a, c, y, t]) => T(a, c, y, 5.800, t, '#333'));
  [[993.500, 1007.500, '계정번호'], [1026, 1034.500, '날짜'], [1090, 1108, '계 정 내 용'], [1160, 1178.500, '국토해양공단'], [1193.500, 1216, '한국종합공단'], [1235, 1245.500, '설계인']].forEach(([a, c, t]) => T(a, c, 647.500, 4, t, '#333'));
  return o.join('');
}
define('drawing-sheet', () => `
<style>
:host{display:block;padding:8px 10px 8px 9px;box-sizing:border-box;background:repeating-linear-gradient(135deg,#d6d6d6 0 .7px,#ededed .7px 2.120px)}
svg{display:block;background:#fff;font-family:"Liberation Sans","Noto Sans CJK KR",sans-serif;font-weight:400}
</style><svg width="746" height="525" viewBox="719 144 746 525">${bridge()}</svg>`);

/* text that is tracked to a given width */
define('fit-text', `<style>:host{display:inline-block;white-space:pre;flex:none}</style><slot></slot>`, el => {
  const w = +el.getAttribute('w'), n = el.textContent.length;
  const nat = el.getBoundingClientRect().width;
  el.style.letterSpacing = (w - nat) / n + 'px';
  el.style.width = w + 'px';
});
</script>
</body>
</html>
